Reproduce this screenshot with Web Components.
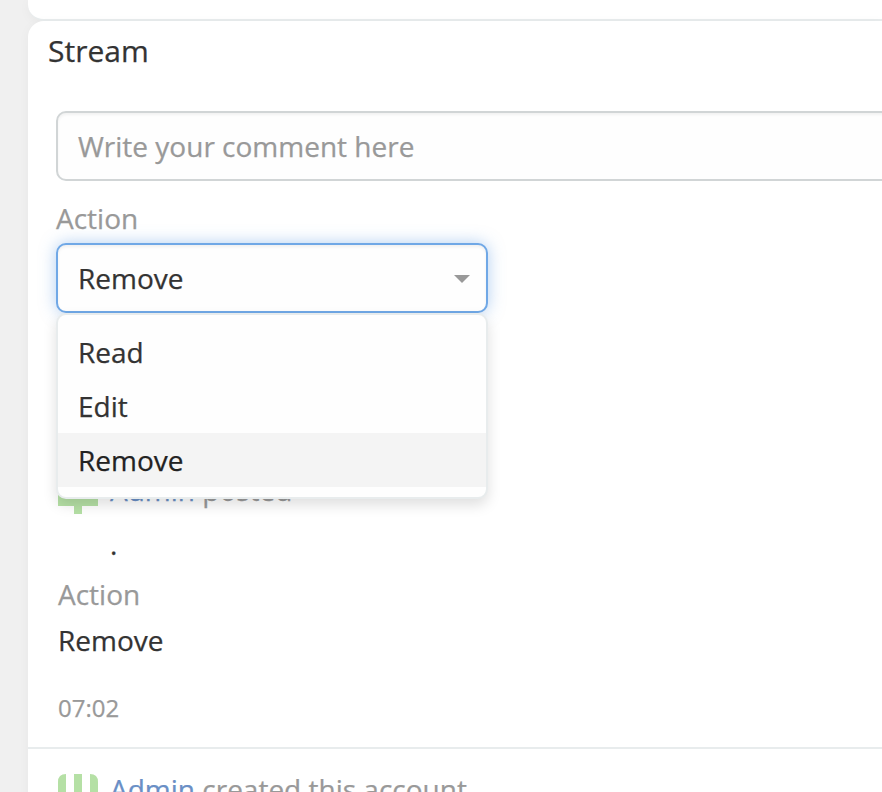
<!DOCTYPE html>
<html lang="en"><head><meta charset="utf-8"><title>Stream</title>
<style>
html,body{margin:0;height:100%;overflow:hidden}
body{background:#f0f0f0;font:28px/40px "Open Sans","Noto Sans",sans-serif;color:#333;-webkit-text-stroke:.25px currentColor}
</style></head><body>
<app-page>
  <app-panel slot="previous" class="previous"></app-panel>
  <app-panel>
    <span slot="title">Stream</span>
    <comment-box placeholder="Write your comment here"></comment-box>
    <action-select label="Action" value="Remove" options="Read,Edit,Remove"></action-select>
    <stream-note kind="posted" user="Admin" text="posted" time="07:02">
      <span slot="body">.</span><span slot="label">Action</span><span slot="value">Remove</span>
    </stream-note>
    <stream-note kind="created" user="Admin" text="created this account"></stream-note>
  </app-panel>
</app-page>
<script>
const define = (name, render) => customElements.define(name, class extends HTMLElement {
  connectedCallback() {
    if (this.shadowRoot) return;
    this.attachShadow({mode: "open"}).innerHTML = render(this);
  }
});

define("app-page", () => `
<style>
:host{display:flex;flex-direction:column;box-sizing:border-box;height:792px;padding-left:28px;overflow:hidden}
</style><slot name="previous"></slot><slot></slot>`);

define("app-panel", el => el.classList.contains("previous") ? `
<style>
:host{display:block;flex:none;height:19px;background:#fff;border-radius:0 0 0 16px;border-bottom:2px solid #e8eced;box-shadow:0 2px 12px rgba(0,0,0,.04)}
</style>` : `
<style>
:host{display:block;flex:none;height:840px;background:#fff;border-radius:16px 0 0 0;box-shadow:0 2px 12px rgba(0,0,0,.04);position:relative}
header{font-size:30px;line-height:40px;padding:10px 20px 40px}
</style><header><slot name="title"></slot></header><slot></slot>`);

define("comment-box", el => `
<style>
:host{display:block;padding-left:28px}
div{box-sizing:border-box;height:70px;width:900px;border:2px solid #d1d5d6;border-radius:10px;padding:13px 20px;color:#999;background:#fefefe;box-shadow:inset 0 2px 3px rgba(0,0,0,.05)}
</style><div>${el.getAttribute("placeholder")}</div>`);

define("action-select", el => `
<style>
:host{display:block;width:432px;margin:17px 0 0 28px;position:relative;z-index:2}
label{display:block;color:#999;height:45px}
.control{box-sizing:border-box;height:70px;border:2px solid #70a8e6;border-radius:10px;padding:0 16px 0 20px;display:flex;align-items:center;justify-content:space-between;background:#fefefe;box-shadow:inset 0 2px 3px rgba(0,0,0,.06),0 0 16px rgba(102,160,230,.5)}
svg{display:block;margin-top:2px}
.menu{position:absolute;left:0;right:0;top:100%;box-sizing:border-box;border:2px solid #e8eced;border-radius:10px;background:#fefefe;padding:10px 0;box-shadow:0 6px 14px rgba(0,0,0,.13)}
.option{padding:7px 20px}
.selected{background:#f4f4f4;color:#222}
</style>
<label>${el.getAttribute("label")}</label>
<div class="control"><span>${el.getAttribute("value")}</span><svg width="16" height="8"><path d="M0 0H16L8 8Z" fill="#999"/></svg></div>
<div class="menu">${el.getAttribute("options").split(",").map(o => `<div class="option${o === el.getAttribute("value") ? " selected" : ""}">${o}</div>`).join("")}</div>`);

define("user-avatar", el => `
<style>:host{display:block;width:40px;height:40px}svg{display:block}</style>
<svg width="40" height="40"><g fill="#b5e0a5">${el.getAttribute("kind") === "posted"
  ? '<path d="M16 0H24V8H40V32H24V40H16V32H0V8H16Z"/>'
  : '<path d="M0 8Q0 0 8 0V40H0ZM16 0H24V40H16ZM32 0Q40 0 40 8V40H32Z"/>'}</g></svg>`);

define("stream-note", el => `
<style>
:host{display:block;color:#333}
.note{box-sizing:border-box;padding:0 30px}
.posted{margin-top:157px;height:279px;border-bottom:2px solid #e8eced}
.created{padding-top:21px}
.head{display:flex;align-items:flex-start;gap:12px;padding-top:4px;color:#999}
.text{margin-top:-4px}
.created .text{margin-top:-5px}
a{color:#6a8fc6}
.body{padding:10px 0 0 52px}
.label{margin-top:10px;color:#999}
.value{margin-top:6px}
.time{font-size:24px;margin-top:28px;color:#999}
</style>
<div class="note ${el.getAttribute("kind")}">
<div class="head"><user-avatar kind="${el.getAttribute("kind")}"></user-avatar><div class="text"><a>${el.getAttribute("user")}</a> ${el.getAttribute("text")}</div></div>
${el.getAttribute("kind") === "posted" ? `<div class="body"><slot name="body"></slot></div><div class="label"><slot name="label"></slot></div><div class="value"><slot name="value"></slot></div><div class="time">${el.getAttribute("time")}</div>` : ""}
</div>`);
</script></body></html>
